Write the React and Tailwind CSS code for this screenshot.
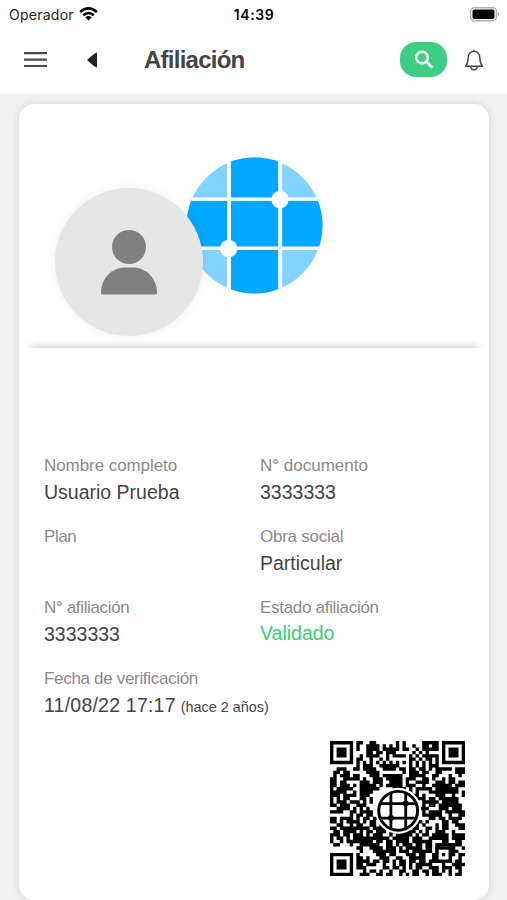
import { clsx } from "clsx";

const FIELDS = [
  { label: "Nombre completo", value: "Usuario Prueba", tracking: "tracking-[-0.07px]" },
  { label: "N° documento", value: "3333333" },
  { label: "Plan", value: "", tracking: "tracking-[-0.4px]" },
  { label: "Obra social", value: "Particular", tracking: "tracking-[-0.25px]" },
  { label: "N° afiliación", value: "3333333", tracking: "tracking-[-0.35px]" },
  { label: "Estado afiliación", value: "Validado", tracking: "tracking-[-0.3px]", ok: true },
  { label: "Fecha de verificación", value: "11/08/22 17:17", note: "(hace 2 años)", tracking: "tracking-[-0.32px]" },
];

// 41x41 modules, "#" is dark
const QR_ROWS = [
  "#######.##..##......#.#.....#####.#######",
  "#.....#.#..####.#.#.#.#..#..##.##.#.....#",
  "#.###.#.#..####.#####.##..#.#####.#.###.#",
  "#.###.#....##.##.###.....#.#.#....#.###.#",
  "#.###.#..#.####..#.####.#.#.#####.#.###.#",
  "#.....#.##..#..#.#......##.#.##.#.#.....#",
  "#######.#.#.#.#.#.#.#.#.#.#.#.#.#.#######",
  "........#.###..######...#.#.#.###........",
  "..###..##.####..####.##.##.##.#.#####.###",
  ".##.##.....####.......#.###.##..##....###",
  ".#.###.##...###.######..#####..##...#..#.",
  "##..#####.#..###.#####.###..##.#..#.##...",
  "##.##....###.###..####.#..####..###.##.##",
  "##.###.#.#####.#.#####.###..#..######.###",
  "#.#####..######....####.#.#####.#######..",
  "#####..#.####.........###.#...#########.#",
  "###.####.###...........#.##.#...###..#..#",
  "#.#.##...##.#............####.##.######..",
  "#.###.###.#.#............#..#####.#####..",
  "##.###..###...............#.#.##.#######.",
  "..####.#.#.#..............####...###.###.",
  "####..##.####............##.#.####.######",
  "......#.##.##...........###.######..#..##",
  "##.####.#.##.##.........#.#...##.##.####.",
  "##.#.####.#.##..#.....##..##.#....##.##..",
  "..##..#.##..##.###...####.#.#...#.##..###",
  "##.#########.#####.#####.##..##.#.##...##",
  ".##.####.#.##.###.##..####.#.#..###..#...",
  "###.##.###.#.###..#.#####.#.##.#####.####",
  "#.##.#.###########.#####.###..######.####",
  "#..#.########.##.##.####.######...##..##.",
  ".##...#..######..##.#.###.##.##.########.",
  "........##..####.###.#.#####.##.#...##..#",
  "#######..#...#######.###.######.#.#.###..",
  "#.....#.#.....###.##...###.##..##...##.##",
  "#.###.#.##.#...###..##..#####..######..#.",
  "#.###.#.####.##.##.#.##.##.##.####..#.##.",
  "#.###.#.##.###..#..#.##.#.#####...#..####",
  "#.....#.###.....##.##.#.#.##..###.###.##.",
  "#######...#.##.#..#..##..##.##.##.#.#..#.",
  "#######..###..##.##..#.#.##..#.###..#.##.",
];

const FINDER = ["#######", "#.....#", "#.###.#", "#.###.#", "#.###.#", "#.....#", "#######"];

function QrCode() {
  // lower left finder sits on the last seven rows
  const rows = QR_ROWS.map((row, y) => (y < 33 ? row : (FINDER[y - 34] ?? ".......") + "." + row.slice(8)));
  const path = rows
    .map((row, y) => [...row].map((c, x) => (c === "#" ? `M${x} ${y}h1.03v1.03h-1.03z` : "")).join(""))
    .join("");
  return (
    <svg className="h-[135px] w-[135px]" viewBox="0 0 41 41">
      <path d={path} fill="#000" />
      {/* alignment mark */}
      <path d="M32 32h5v5h-5z" fill="#000" />
      <path d="M33 33h3v3h-3z" fill="#fff" />
      <path d="M34 34h1v1h-1z" fill="#000" />
      <circle cx="20.7" cy="21.2" r="7" fill="#fff" />
      <circle cx="20.7" cy="21.2" r="5.9" fill="#fff" stroke="#000" strokeWidth="0.9" />
      <path d="M18.5 15.6v11.2M23 15.6v11.2M15.1 19h11.2M15.1 23.4h11.2" stroke="#000" strokeWidth="0.85" />
      <circle cx="23" cy="19" r="0.9" />
      <circle cx="18.5" cy="23.4" r="0.9" />
    </svg>
  );
}

function Globe() {
  return (
    <svg className="absolute left-[167px] top-[53px] h-[138px] w-[138px]" viewBox="0 0 138 138">
      <clipPath id="globe">
        <circle cx="68.5" cy="68.5" r="68" />
      </clipPath>
      <g clipPath="url(#globe)">
        <rect width="138" height="138" fill="#82d3ff" />
        <path d="M43 0h52v138H43zM0 42h138v50H0z" fill="#00a8ff" />
        <path d="M43 0v138M94.2 0v138" stroke="#fff" strokeWidth="4" />
        <path d="M0 42.3h138M0 91.3h138" stroke="#fff" strokeWidth="3.6" />
      </g>
      <circle cx="94" cy="42.5" r="8.7" fill="#fff" />
      <circle cx="42.7" cy="91.5" r="8.7" fill="#fff" />
    </svg>
  );
}

function StatusBar() {
  return (
    <div className="grid h-7 grid-cols-3 items-center pl-[9px] pr-[7px] font-['Inter',sans-serif] text-[14px] text-black">
      <div className="flex items-center gap-[5px]">
        <span className="tracking-[0.25px] text-[#222]">Operador</span>
        <svg className="h-[14px] w-[19px]" viewBox="0 0 19 14" fill="none" stroke="#000" strokeWidth="2.5">
          <path d="M1.1 5Q9.5-2.2 17.9 5M4.2 8.2Q9.5 3.8 14.8 8.2" />
          <path d="M6.3 10.3Q9.5 7.7 12.7 10.3L9.5 13.5z" fill="#000" stroke="none" />
        </svg>
      </div>
      <span className="-ml-px text-center font-semibold tracking-[0.6px]">14:39</span>
      <svg className="h-[15px] w-[31px] justify-self-end" viewBox="0 0 31 15">
        <rect x="1.5" y="0.8" width="26" height="13" rx="4" fill="#fff" stroke="#b0b0b0" strokeWidth="1.5" />
        <rect x="3.5" y="2.5" width="22" height="9.6" rx="2" />
        <path d="M29 5.1q2.5 2.2 0 4.4z" fill="#999" />
      </svg>
    </div>
  );
}

function Header() {
  return (
    <div className="flex h-[66px] items-center pb-[3px] pl-6 pr-[23px]">
      <svg className="h-[18px] w-[23px]" viewBox="0 0 23 18" stroke="#4a4a4a" strokeWidth="2.2">
        <path d="M0 2.2h23M0 8.7h23M0 15h23" />
      </svg>
      <svg className="ml-10 h-4 w-[10px]" viewBox="0 0 10 16">
        <path d="M10 .5v15Q8 15.5 0 8 8 .5 10 .5z" fill="#222" />
      </svg>
      <h1 className="ml-[47px] text-[24px] font-bold leading-8 tracking-[-0.75px] text-[#444]">Afiliación</h1>
      <button className="ml-auto flex h-[35px] w-[47px] items-center justify-center rounded-[16px] bg-[#3dcd83]">
        <svg className="h-5 w-5" viewBox="0 0 20 20" fill="none" stroke="#fff" strokeWidth="2.4">
          <circle cx="8" cy="7.5" r="5.8" />
          <path d="M12.3 11.7l6 6" strokeWidth="2.6" />
        </svg>
      </button>
      <svg className="ml-[17px] h-[22px] w-5" viewBox="0 0 20 22" fill="none" stroke="#444" strokeWidth="1.4" strokeLinejoin="round">
        <path d="M10 2.1C6 2.8 4.2 5.5 4.2 8.5c0 4.5-.4 6-2.6 8.8h16.8c-2.2-2.8-2.6-4.3-2.6-8.8 0-3-1.8-5.7-5.8-6.4z" />
        <path d="M10 .8v1.4M6.8 17.5c0 4.3 6.4 4.3 6.4 0" />
      </svg>
    </div>
  );
}

function Field({ label, value, note, tracking, ok }) {
  return (
    <div className="h-[71px] whitespace-nowrap">
      <p className={clsx("text-[17px] leading-[27px] text-[#8a8a8a]", tracking)}>{label}</p>
      <p
        className={clsx(
          "text-[19.5px]",
          ok ? "leading-[25px] text-[#37cf76]" : "leading-[27px] text-[#444]",
          note && "tracking-[0.22px]"
        )}
      >
        {value}
        {note && <span className="ml-px text-[14.4px] tracking-normal"> {note}</span>}
      </p>
    </div>
  );
}

export default function App() {
  return (
    <div className="h-[900px] w-[507px] overflow-hidden bg-[#f2f2f2] font-['Liberation_Sans',sans-serif]">
      <header className="h-[94px] bg-white">
        <StatusBar />
        <Header />
      </header>
      <main className="pl-[19px] pr-[18px] pt-[10px]">
        <section className="h-[796px] rounded-[15px] bg-white shadow-[0_0_8px_rgba(0,0,0,0.12)]">
          <div className="relative h-[244px]">
            <Globe />
            {/* avatar overlaps the globe */}
            <div className="absolute left-[36px] top-[84px] flex h-[148px] w-[148px] items-center justify-center rounded-full bg-[#e6e6e6] shadow-[0_0_10px_rgba(0,0,0,0.07)]">
              <svg className="h-[66px] w-[58px]" viewBox="0 0 58 66" fill="#808080">
                <circle cx="29" cy="18" r="17" />
                <path d="M1 64C1 49 12 38.500 25 38.500h8c13 0 24 10.500 24 25.500q0 1.500-1.500 1.500h-53Q1 65.500 1 64z" />
              </svg>
            </div>
            <div className="absolute bottom-0 left-[6px] h-[12px] w-[460px] overflow-hidden">
              <div className="mx-[7px] mt-[12px] h-[20px] shadow-[0_0_10px_rgba(0,0,0,0.28)]" />
            </div>
          </div>
          <div className="grid grid-cols-[216px_1fr] pl-[25px] pt-[104px]">
            {FIELDS.map((f) => (
              <Field key={f.label} {...f} />
            ))}
          </div>
          <div className="flex justify-end pr-[24px] pt-[5px]">
            <QrCode />
          </div>
        </section>
      </main>
    </div>
  );
}
